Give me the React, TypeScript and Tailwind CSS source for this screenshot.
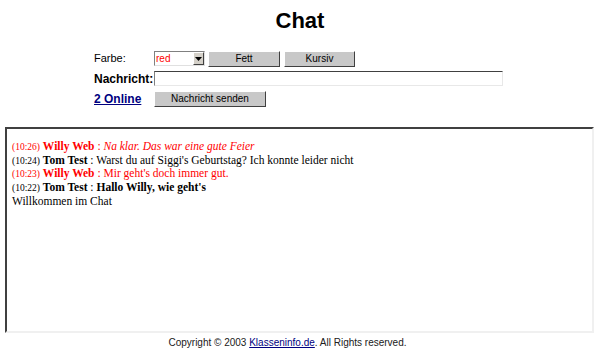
import React from "react";

const btn =
  "h-[16px] bg-[#c8c8c8] border border-t-white border-l-white border-r-[#404040] border-b-[#404040] text-[10px] leading-[14px] text-black text-center";

const line = "h-[13.7px] leading-[13.7px] whitespace-nowrap";
const ts = "text-[9.5px] leading-none";

export default function App() {
  return (
    <div className="w-[600px] h-[351px] bg-white overflow-hidden" style={{ fontFamily: '"Liberation Sans", Arial, sans-serif' }}>
      <div className="h-[44px] flex justify-center pt-[8px]">
        <h1 className="text-[22px] font-bold leading-[26px] text-black">Chat</h1>
      </div>
      <div className="pl-[94px] flex flex-col gap-[4px] pt-[7px]">
        <div className="flex items-center h-[15px]">
          <span className="w-[60px] text-[11px] text-black">Farbe:</span>
          <div className="w-[51px] h-[15px] flex border border-t-[#808080] border-l-[#808080] border-b-[#e0e0e0] border-r-[#e0e0e0] bg-white">
            <span className="flex-1 text-[10px] leading-[13px] text-[#ff0000] pl-[1px]">red</span>
            <div className="w-[11px] h-[13px] bg-[#d4d0c8] border border-t-white border-l-white border-r-[#404040] border-b-[#404040] flex items-center justify-center">
              <svg width="7" height="4" viewBox="0 0 7 4"><path d="M0 0h7L3.5 4z" fill="#000" /></svg>
            </div>
          </div>
          <div className={btn + " w-[72px] ml-[3px]"}>Fett</div>
          <div className={btn + " w-[71px] ml-[4px]"}>Kursiv</div>
        </div>
        <div className="flex items-center h-[15px] mt-[1px]">
          <span className="w-[60px] text-[12px] font-bold text-black">Nachricht:</span>
          <div className="w-[349px] h-[15px] bg-white border border-t-[#404040] border-l-[#808080] border-b-[#e8e8e8] border-r-[#e8e8e8]" />
        </div>
        <div className="flex items-center h-[16px] mt-[1px]">
          <a className="w-[60px] text-[12px] font-bold text-[#000080] underline">2 Online</a>
          <div className={btn + " w-[112px]"}>Nachricht senden</div>
        </div>
      </div>
      <div className="ml-[5px] mt-[20px] w-[589px] h-[206px] border-2 border-t-[#404040] border-l-[#404040] border-r-[#f0f0f0] border-b-[#f0f0f0] bg-white pl-[5px] pt-[11px]" style={{ fontFamily: '"Liberation Serif", "Times New Roman", serif' }}>
        <div className="text-[11.5px]">
          <div className={line + " text-[#ff0000]"}><span className={ts}>(10:26)</span> <b>Willy Web</b> : <i>Na klar. Das war eine gute Feier</i></div>
          <div className={line + " text-black"}><span className={ts}>(10:24)</span> <b>Tom Test</b> : Warst du auf Siggi's Geburtstag? Ich konnte leider nicht</div>
          <div className={line + " text-[#ff0000]"}><span className={ts}>(10:23)</span> <b>Willy Web</b> : Mir geht's doch immer gut.</div>
          <div className={line + " text-black"}><span className={ts}>(10:22)</span> <b>Tom Test</b> : <b>Hallo Willy, wie geht's</b></div>
          <div className={line + " text-black"}>Willkommen im Chat</div>
        </div>
      </div>
      <div className="text-center text-[10px] text-[#202020] mt-[4px] leading-[12px] pr-[25px]">
        Copyright © 2003 <a className="text-[#000080] underline">Klasseninfo.de</a>. All Rights reserved.
      </div>
    </div>
  );
}
